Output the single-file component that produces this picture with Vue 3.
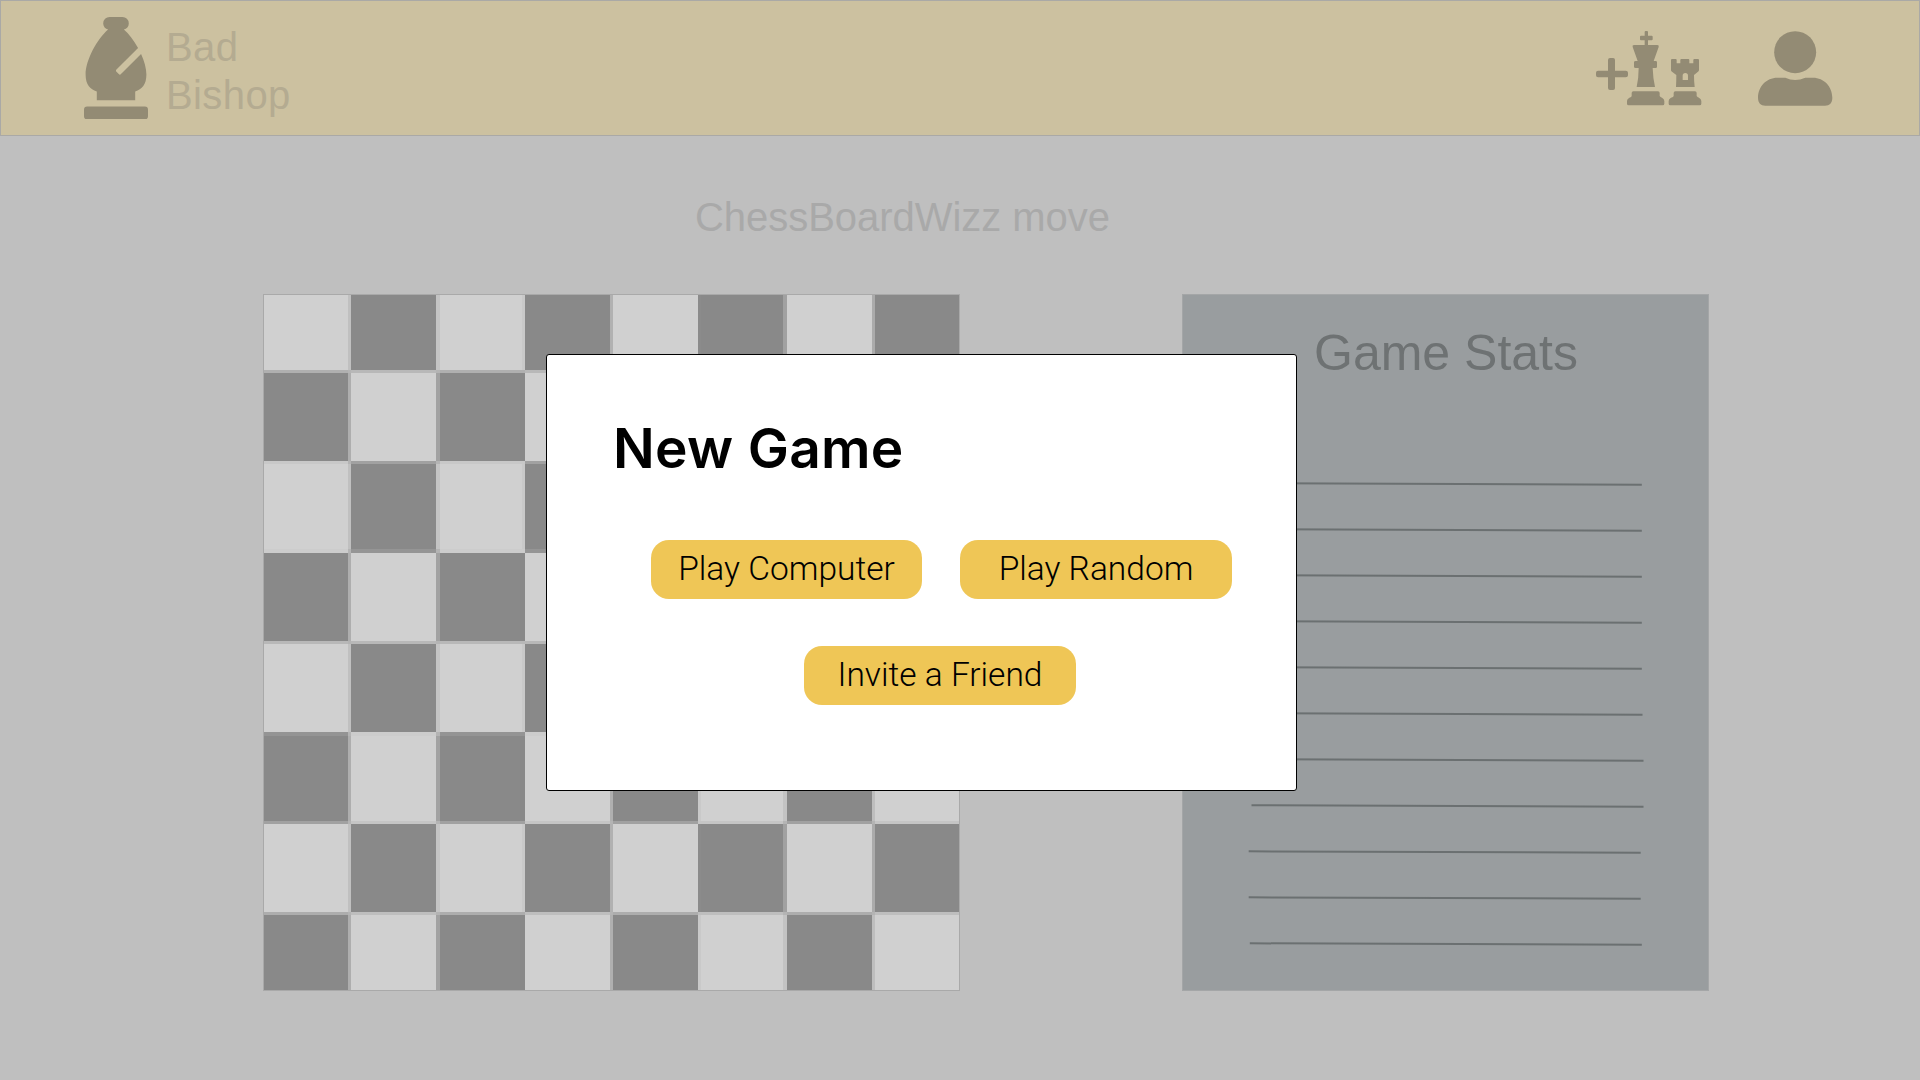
<script setup>
const columns = [84, 3, 85, 4, 82, 3, 85, 3, 85, 3, 82, 4, 85, 3, 84]
const rows = [75, 3, 88, 3, 85, 4, 88, 3, 88, 4, 85, 3, 88, 3, 75]

// Seam tones, given as [before a light square, before a dark square]
const columnSeams = [
  ['#aeaeae', '#c0c0c0'],
  ['#c4c4c4', '#a2a2a2'],
  ['#898989', '#c9c9c9'],
  ['#b1b1b1', '#b0b0b0'],
  ['#c9c9c9', '#8b8b8b'],
  ['#a1a1a1', '#c3c3c3'],
  ['#bebebe', '#ababab'],
]
const rowSeams = [
  ['#b8b8b8', '#b0b0b0'],
  ['#c8c8c8', '#a1a1a1'],
  ['#959595', '#cccccc'],
  ['#b8b8b8', '#b8b8b8'],
  ['#cccccc', '#949494'],
  ['#a1a1a1', '#c5c5c5'],
  ['#bebebe', '#adadad'],
]

const rowSeamTone = (row, col) => rowSeams[row][(row + 1 + col) % 2]

const toneAt = (r, c) => {
  const row = r >> 1
  const col = c >> 1
  if (r % 2 === 0 && c % 2 === 0) return (row + col) % 2 ? '#898989' : '#d0d0d0'
  if (r % 2 === 0) {
    const nextDark = (row + col + 1) % 2
    // The seam after column 4 belongs to the square on its right
    if (col === 4) return nextDark ? '#8b8b8b' : '#c9c9c9'
    return columnSeams[col][nextDark]
  }
  if (c % 2 === 0 || col === 2) return rowSeamTone(row, col)
  if (col === 4) return rowSeamTone(row, 5)
  return '#b4b4b4'
}

const cells = rows.flatMap((_, r) => columns.map((_, c) => toneAt(r, c)))
const boardTracks = {
  gridTemplateColumns: columns.map((n) => n + 'px').join(' '),
  gridTemplateRows: rows.map((n) => n + 'px').join(' '),
}

const lineStarts = [66.8, 66.8, 66.8, 66.8, 66.8, 67.5, 68.5, 68.5, 65.7, 65.7, 66.8]
</script>

<template>
  <div class="page">
    <header class="topbar">
      <svg class="bishop" viewBox="0 0 320 512">
        <path d="M8 287.88c0 51.64 22.14 73.83 56 84.6V416h192v-43.52c33.86-10.77 56-33 56-84.6 0-30.61-10.73-67.1-26.69-102.56L185 285.65a8 8 0 0 1-11.31 0l-11.31-11.31a8 8 0 0 1 0-11.31L270.27 155.1c-20.8-37.91-46.47-72.1-70.87-92.59C213.4 59.09 224 47.05 224 32a32 32 0 0 0-32-32h-64a32 32 0 0 0-32 32c0 15 10.6 27.09 24.6 30.51C67.81 106.8 8 214.5 8 287.88zM304 448H16a16 16 0 0 0-16 16v32a16 16 0 0 0 16 16h288a16 16 0 0 0 16-16v-32a16 16 0 0 0-16-16z" />
      </svg>
      <div class="brand">Bad<br />Bishop</div>
      <svg class="pieces" viewBox="48 63 318 224">
        <path d="M90 144h9q6 0 6 6v32h32q7 0 7 6v8q0 6-7 6h-32v32q0 6-6 6h-9q-6 0-6-6v-32H54q-6 0-6-6v-8q0-6 6-6h30v-32q0-6 6-6z" />
        <path d="M192 63h9q3 0 3 3v11h11q3 0 3 3v8q0 3-3 3h-11v14h28q6 0 4 6l-15 42h6q4 0 4 4v13q0 4-4 4h-9q1 30 7 57h-55q6-27 6-57h-9q-5 0-5-4v-13q0-4 5-4h6l-15-42q-2-6 4-6h32V91h-11q-3 0-3-3v-8q0-3 3-3h11V66q0-3 3-3z" />
        <path d="M160 244h74q5 0 5 5v9q2 4 7 5 7 4 7 10v8q0 5-5 5H146q-5 0-5-5v-8q0-6 7-10 7-1 7-5v-9q0-5 5-5z" />
        <path fill-rule="evenodd" d="M276 147h11q3 0 3 3v10h11v-10q0-3 3-3h21q3 0 3 3v10h12v-10q0-3 3-3h11q3 0 3 3v30q0 3-3 5l-12 10q0 19 2 36h-56q1-17 1-36l-13-10q-3-2-3-5v-30q0-3 3-3zm32 63h16v-13q0-8-8-8t-8 8z" />
        <path d="M286 244h59q5 0 5 5v9q2 4 7 5 7 4 7 10v8q0 5-5 5h-88q-5 0-5-5v-8q0-6 7-10 8-1 8-5v-9q0-5 5-5z" />
      </svg>
      <svg class="person" viewBox="534 62 224 225">
        <circle cx="645.500" cy="125.500" r="63" />
        <path d="M592 202h24q29 14 60 0h23c33 0 58 27 58 60 0 16-8 24-22 24H556c-14 0-22-8-22-24 0-33 25-60 58-60z" />
      </svg>
    </header>

    <div class="turn">ChessBoardWizz move</div>

    <main class="content">
      <div class="board" :style="boardTracks">
        <i v-for="(tone, i) in cells" :key="i" :style="{ background: tone }"></i>
      </div>
      <section class="stats">
        <h2>Game Stats</h2>
        <div class="ruled">
          <svg v-for="(start, i) in lineStarts" :key="i" class="rule" viewBox="0 0 526 46">
            <line :x1="start" y1="22.300" :x2="start + 392" y2="23.700" />
          </svg>
        </div>
      </section>
    </main>

    <div class="dialog">
      <h1>New Game</h1>
      <div class="actions">
        <button>Play Computer</button>
        <button class="wide">Play Random</button>
      </div>
      <div class="actions single">
        <button class="wide">Invite a Friend</button>
      </div>
    </div>
  </div>
</template>

<style>
body {
  margin: 0;
  overflow: hidden;
}
</style>

<style scoped>
.page {
  position: relative;
  box-sizing: border-box;
  width: 1920px;
  height: 1080px;
  background: #bfbfbf;
  font-family: "Liberation Sans", Arial, sans-serif;
}
.topbar {
  box-sizing: border-box;
  display: flex;
  align-items: flex-start;
  height: 136px;
  border: 1px solid #aaa9a6;
  background: #ccc1a0;
  padding: 16px 86px 0 83px;
}
.topbar svg {
  fill: #938b74;
  flex: none;
}
.bishop {
  width: 64px;
  height: 102.400px;
}
.brand {
  margin: 6px auto 0 18px;
  font-size: 40px;
  line-height: 48px;
  letter-spacing: 0.400px;
  color: #b4ab91;
}
.pieces {
  width: 106px;
  height: 74.670px;
  margin-top: 14px;
}
.person {
  width: 74.670px;
  height: 75px;
  margin: 14px 0 0 56px;
}
.turn {
  margin: 57px 0 0 695px;
  font-size: 40px;
  line-height: 48px;
  letter-spacing: -0.040px;
  color: #a9a9a9;
}
.content {
  display: flex;
  gap: 222px;
  padding: 53px 0 0 263px;
}
.board {
  display: grid;
  border: 1px solid #a9a9a9;
}
.stats {
  box-sizing: border-box;
  width: 527px;
  height: 697px;
  border: 1px solid #a4a6a7;
  background: #999d9f;
}
h2 {
  margin: 28px 0 0 1px;
  text-align: center;
  font-size: 50px;
  font-weight: 400;
  line-height: 60px;
  color: #6e7273;
}
.ruled {
  display: flex;
  flex-direction: column;
  margin-top: 78px;
}
.rule {
  display: block;
  width: 526px;
  height: 46px;
}
.rule line {
  stroke: #6b7071;
  stroke-width: 2;
}
.dialog {
  position: absolute;
  left: 546px;
  top: 354px;
  box-sizing: border-box;
  width: 751px;
  height: 437px;
  border: 1px solid #000;
  border-radius: 3px;
  background: #fff;
}
h1 {
  margin: 59px 0 0 66px;
  font-family: Inter, "Liberation Sans", sans-serif;
  font-size: 55px;
  font-weight: 600;
  line-height: 68px;
  letter-spacing: 0.300px;
  color: #000;
}
.actions {
  display: flex;
  gap: 38px;
  padding: 58px 0 0 104px;
}
.single {
  padding: 47px 0 0 257px;
}
button {
  box-sizing: border-box;
  width: 271px;
  height: 59px;
  padding: 0 0 2px;
  border: 0;
  border-radius: 18px;
  background: #efc656;
  color: #000;
  font: 300 33.500px/57px Roboto, sans-serif;
  white-space: nowrap;
}
.wide {
  width: 272px;
}
</style>
